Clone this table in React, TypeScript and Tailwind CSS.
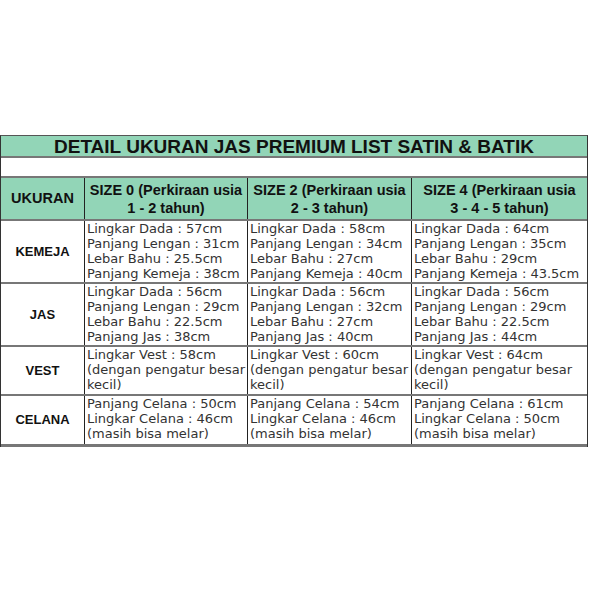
import React from "react";

const green = "bg-[#92d5b7]";

const rows = [
  {
    label: "KEMEJA",
    h: "h-[63px]",
    cells: [
      ["Lingkar Dada : 57cm", "Panjang Lengan : 31cm", "Lebar Bahu : 25.5cm", "Panjang Kemeja : 38cm"],
      ["Lingkar Dada : 58cm", "Panjang Lengan : 34cm", "Lebar Bahu : 27cm", "Panjang Kemeja : 40cm"],
      ["Lingkar Dada : 64cm", "Panjang Lengan : 35cm", "Lebar Bahu : 29cm", "Panjang Kemeja : 43.5cm"],
    ],
  },
  {
    label: "JAS",
    h: "h-[63px]",
    cells: [
      ["Lingkar Dada : 56cm", "Panjang Lengan : 29cm", "Lebar Bahu : 22.5cm", "Panjang Jas : 38cm"],
      ["Lingkar Dada : 56cm", "Panjang Lengan : 32cm", "Lebar Bahu : 27cm", "Panjang Jas : 40cm"],
      ["Lingkar Dada : 56cm", "Panjang Lengan : 29cm", "Lebar Bahu : 22.5cm", "Panjang Jas : 44cm"],
    ],
  },
  {
    label: "VEST",
    h: "h-[49px]",
    cells: [
      ["Lingkar Vest : 58cm", "(dengan pengatur besar", "kecil)"],
      ["Lingkar Vest : 60cm", "(dengan pengatur besar", "kecil)"],
      ["Lingkar Vest : 64cm", "(dengan pengatur besar", "kecil)"],
    ],
  },
  {
    label: "CELANA",
    h: "h-[51px]",
    cells: [
      ["Panjang Celana : 50cm", "Lingkar Celana : 46cm", "(masih bisa melar)"],
      ["Panjang Celana : 54cm", "Lingkar Celana : 46cm", "(masih bisa melar)"],
      ["Panjang Celana : 61cm", "Lingkar Celana : 50cm", "(masih bisa melar)"],
    ],
  },
];

export default function App() {
  return (
    <div className="w-[590px] h-[590px] bg-white pt-[135px]">
      <div className="w-[588px] border-l border-r border-[#333] border-t border-t-[#555]">
        {/* Title */}
        <div
          className={`${green} h-[22px] flex items-center justify-center border-b-2 border-[#777] font-bold text-[19px] text-[#111] leading-none`}
          style={{ fontFamily: '"Liberation Sans", Arial, sans-serif' }}
        >
          DETAIL UKURAN JAS PREMIUM LIST SATIN &amp; BATIK
        </div>
        {/* Blank */}
        <div className="h-[20px] border-b-2 border-[#777] bg-white" />
        {/* Header */}
        <div
          className={`grid grid-cols-[84px_163px_164px_175px] ${green} h-[43px] border-b-2 border-[#777] font-bold text-[#111]`}
          style={{ fontFamily: '"Liberation Sans", Arial, sans-serif' }}
        >
          <div className="flex items-center justify-center text-[14.5px] border-r border-[#222]">UKURAN</div>
          <div className="flex flex-col items-center justify-center text-[14.5px] leading-[18px] border-r border-[#222]">
            <span>SIZE 0 (Perkiraan usia</span>
            <span>1 - 2 tahun)</span>
          </div>
          <div className="flex flex-col items-center justify-center text-[14.5px] leading-[18px] border-r border-[#222]">
            <span>SIZE 2 (Perkiraan usia</span>
            <span>2 - 3 tahun)</span>
          </div>
          <div className="flex flex-col items-center justify-center text-[14.5px] leading-[18px]">
            <span>SIZE 4 (Perkiraan usia</span>
            <span>3 - 4 - 5 tahun)</span>
          </div>
        </div>
        {rows.map((r, i) => (
          <div
            key={r.label}
            className={`grid grid-cols-[84px_163px_164px_175px] ${r.h} ${
              i === rows.length - 1 ? "border-b-[3px] border-[#777]" : "border-b-2 border-[#777]"
            }`}
          >
            <div
              className="flex items-center justify-center font-bold text-[13px] text-[#111] border-r border-[#222]"
              style={{ fontFamily: '"Liberation Sans", Arial, sans-serif' }}
            >
              {r.label}
            </div>
            {r.cells.map((c, j) => (
              <div
                key={j}
                className={`flex flex-col pl-[2px] pt-0 text-[13px] leading-[15px] text-[#333] whitespace-nowrap overflow-hidden ${
                  j < 2 ? "border-r border-[#222]" : ""
                }`}
                style={{ fontFamily: '"DejaVu Sans", sans-serif' }}
              >
                {c.map((t, k) => (
                  <span key={k}>{t}</span>
                ))}
              </div>
            ))}
          </div>
        ))}
      </div>
    </div>
  );
}
